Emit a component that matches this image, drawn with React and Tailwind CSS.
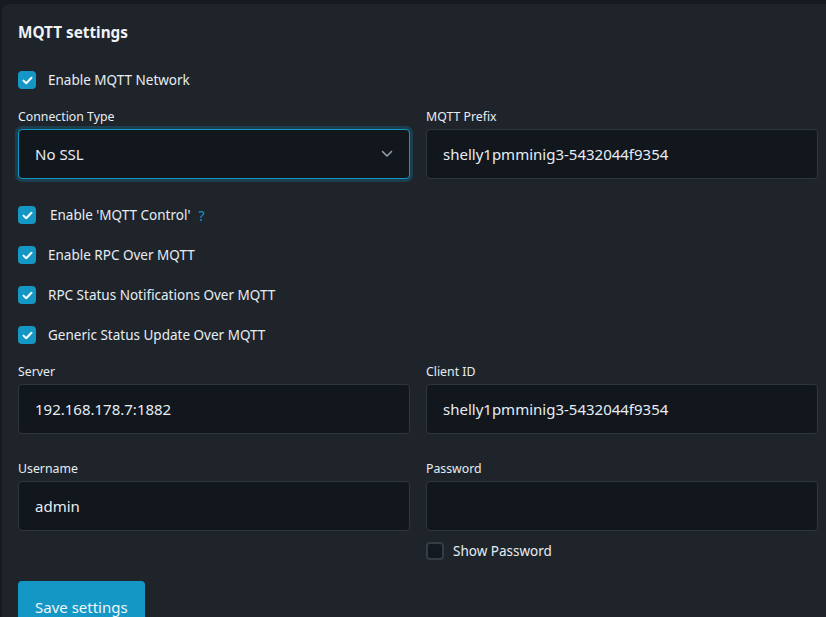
import React from "react";

const font = { fontFamily: '"Noto Sans", "Open Sans", sans-serif' };

function Check({ checked = true }) {
  if (!checked) {
    return (
      <span className="w-[18px] h-[18px] rounded-[4px] border-2 border-[#343c46] bg-[#131920] shrink-0" />
    );
  }
  return (
    <span className="w-[18px] h-[18px] rounded-[4px] bg-[#1497c5] flex items-center justify-center shrink-0">
      <svg width="11" height="9" viewBox="0 0 11 9" fill="none">
        <path d="M1.5 4.6 L4.2 7.2 L9.5 1.8" stroke="white" strokeWidth="2" strokeLinecap="round" strokeLinejoin="round" />
      </svg>
    </span>
  );
}

function CheckRow({ label, className = "", labelClass = "ml-[12px]", extra }) {
  return (
    <div className={"flex items-center h-[20px] " + className}>
      <Check />
      <span className={"text-[13.5px] text-[#e6edf3] " + labelClass}>{label}</span>
      {extra}
    </div>
  );
}

function Field({ label, value }) {
  return (
    <div className="flex flex-col">
      <div className="text-[12.3px] leading-[18px] pt-[1px] text-[#e6edf3]">{label}</div>
      <div className="mt-[3px] h-[50px] rounded-[4px] border border-[#30363d] bg-[#12171e] flex items-center pl-[16px] text-[15px] text-[#e6edf3]">
        {value}
      </div>
    </div>
  );
}

export default function App() {
  return (
    <div className="w-[826px] h-[617px] overflow-hidden bg-[#161b22] pt-[4px] pl-[2px]" style={font}>
      <div className="w-[832px] min-h-[700px] rounded-tl-[8px] bg-[#1f242b] px-[16px] pt-[18px]">
        <div className="text-[15.3px] leading-[20px] font-bold text-[#f0f3f6]">MQTT settings</div>

        <CheckRow label="Enable MQTT Network" className="mt-[28px]" />

        <div className="grid grid-cols-[392px_392px] gap-x-[16px] mt-[17px]">
          <div className="flex flex-col">
            <div className="text-[12.3px] leading-[18px] pt-[1px] text-[#e6edf3]">Connection Type</div>
            <div className="mt-[3px] h-[50px] rounded-[4px] border border-[#1497c5] bg-[#12171e] shadow-[0_0_0_3px_#1a3f4f] flex items-center justify-between pl-[16px] pr-[16px] text-[15px] text-[#e6edf3]">
              <span>No SSL</span>
              <svg width="12" height="8" viewBox="0 0 12 8" fill="none">
                <path d="M1.5 1.5 L6 6 L10.5 1.5" stroke="#9aa4af" strokeWidth="1.5" strokeLinecap="round" strokeLinejoin="round" />
              </svg>
            </div>
          </div>
          <Field label="MQTT Prefix" value="shelly1pmminig3-5432044f9354" />
        </div>

        <div className="flex flex-col gap-[20px] mt-[26px]">
          <CheckRow
            label="Enable 'MQTT Control'"
            labelClass="ml-[14px]"
            extra={<span className="ml-[8px] text-[14px] text-[#1497c5]">?</span>}
          />
          <CheckRow label="Enable RPC Over MQTT" />
          <CheckRow label="RPC Status Notifications Over MQTT" />
          <CheckRow label="Generic Status Update Over MQTT" />
        </div>

        <div className="grid grid-cols-[392px_392px] gap-x-[16px] mt-[17px]">
          <Field label="Server" value="192.168.178.7:1882" />
          <Field label="Client ID" value="shelly1pmminig3-5432044f9354" />
        </div>

        <div className="grid grid-cols-[392px_392px] gap-x-[16px] mt-[25px]">
          <Field label="Username" value="admin" />
          <div className="flex flex-col">
            <Field label="Password" value="" />
            <div className="flex items-center h-[20px] mt-[10px]">
              <Check checked={false} />
              <span className="ml-[9px] text-[13.5px] text-[#e6edf3]">Show Password</span>
            </div>
          </div>
        </div>

        <button className="mt-[20px] h-[52px] px-[17px] rounded-[4px] bg-[#1497c5] text-[15px] text-[#f0f6fa]">
          Save settings
        </button>
      </div>
    </div>
  );
}
